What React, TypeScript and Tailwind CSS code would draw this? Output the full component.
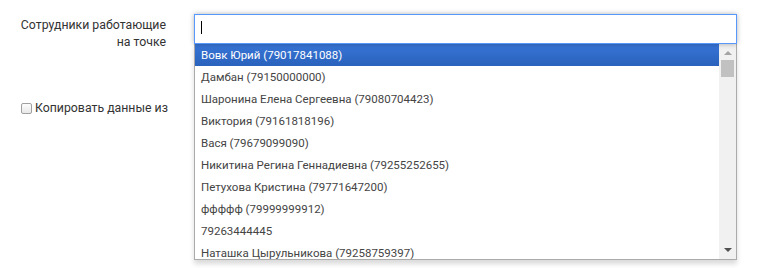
import React from "react";

const items = [
  "Вовк Юрий (79017841088)",
  "Дамбан (79150000000)",
  "Шаронина Елена Сергеевна (79080704423)",
  "Виктория (79161818196)",
  "Вася (79679099090)",
  "Никитина Регина Геннадиевна (79255252655)",
  "Петухова Кристина (79771647200)",
  "ффффф (79999999912)",
  "79263444445",
  "Наташка Цырульникова (79258759397)",
];

export default function App() {
  return (
    <div className="w-[762px] h-[268px] bg-white flex pt-[14px] font-['Roboto',sans-serif] text-[12.3px] text-[#333]">
      <div className="w-[194px] shrink-0 flex flex-col">
        <div className="mt-[3px] pr-[28px] text-right leading-[17px]">
          Сотрудники работающие
          <br />
          на точке
        </div>
        <div className="mt-[49px] pl-[21px] flex items-center leading-[17px]">
          <span className="w-[11px] h-[11px] border border-[#a0a0a0] rounded-[2px] bg-gradient-to-b from-[#fcfcfc] to-[#e8e8e8] shrink-0" />
          <span className="ml-[3px]">Копировать данные из</span>
        </div>
      </div>
      <div className="w-[543px] shrink-0 flex flex-col">
        <div className="h-[30px] border border-[#5897fb] bg-white shadow-[0_0_5px_rgba(0,0,0,0.3)] relative z-10 pl-[6px] pt-[6px]">
          <div className="w-[1px] h-[13px] bg-black" />
        </div>
        <div className="h-[216px] border-x border-b border-[#aaa] bg-white shadow-[0_4px_5px_rgba(0,0,0,0.15)] flex overflow-hidden">
          <div className="flex-1 flex flex-col overflow-hidden text-[11.5px] text-[#444]">
            {items.map((t, i) => (
              <div
                key={i}
                className={
                  "h-[22px] shrink-0 flex items-center pl-[6px] leading-[22px] whitespace-nowrap " +
                  (i === 0 ? "bg-gradient-to-b from-[#3875d7] to-[#2a62bc] text-white" : "")
                }
              >
                {t}
              </div>
            ))}
          </div>
          <div className="w-[17px] shrink-0 bg-[#f1f1f1] flex flex-col items-center">
            <div className="mt-[7px] w-0 h-0 border-l-[4px] border-r-[4px] border-b-[4px] border-l-transparent border-r-transparent border-b-[#a3a3a3]" />
            <div className="mt-[5px] w-[13px] h-[17px] bg-[#c1c1c1]" />
            <div className="flex-1" />
            <div className="mb-[7px] w-0 h-0 border-l-[4px] border-r-[4px] border-t-[4px] border-l-transparent border-r-transparent border-t-[#505050]" />
          </div>
        </div>
      </div>
    </div>
  );
}
